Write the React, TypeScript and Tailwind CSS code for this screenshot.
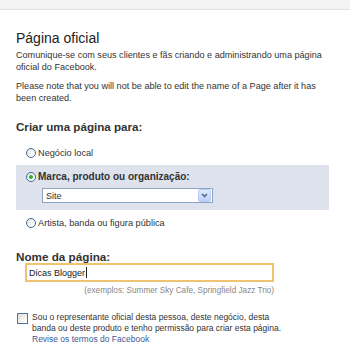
import * as React from "react";

function Radio({ checked = false }: { checked?: boolean }) {
  return (
    <span className="flex h-[10px] w-[10px] shrink-0 items-center justify-center rounded-full border border-[#3d6a9c] bg-[linear-gradient(135deg,#e2e2dc_0%,#ffffff_80%)]">
      {checked && <span className="h-[4px] w-[4px] rounded-full bg-[#2cb02c]" />}
    </span>
  );
}

function RadioRow({ label, checked, bold }: { label: string; checked?: boolean; bold?: boolean }) {
  return (
    <label className="flex h-[12px] items-center gap-[2px] pl-[10px]">
      <Radio checked={checked} />
      <span className={bold ? "text-[10px] font-bold leading-[12px] text-[#333]" : "text-[9.2px] leading-[12px]"}>
        {label}
      </span>
    </label>
  );
}

export default function App() {
  return (
    <div className="h-[350px] w-[350px] overflow-hidden bg-white font-['Liberation_Sans',Arial,sans-serif] text-[#333]">
      {/* Top strip */}
      <div className="h-[10px] border-b border-[#e2e2e2] bg-[#f3f3f3]" />

      <div className="pl-4 pr-5">
        <h1 className="mt-[20px] text-[14px] leading-4 text-[#222]">Página oficial</h1>
        <p className="mt-[3px] text-[9.1px] leading-[12px]">
          Comunique-se com seus clientes e fãs criando e administrando uma página oficial do Facebook.
        </p>
        <p className="mt-[7px] text-[9.1px] leading-[12px]">
          Please note that you will not be able to edit the name of a Page after it has been created.
        </p>

        <h2 className="mt-[16px] text-[11.6px] font-bold leading-[14px] text-[#333]">Criar uma página para:</h2>

        <div className="mt-[13px]">
          <RadioRow label="Negócio local" />
          <div className="mt-[6px] h-[45px] w-[313px] bg-[#dde2ec] pt-[6px]">
            <RadioRow label="Marca, produto ou organização:" checked bold />
            <div className="ml-[26px] mt-[5px] flex h-[15px] w-[171px] items-center justify-between border border-[#8aa5c2] bg-white pl-[3px] pr-[1px]">
              <span className="text-[9px] leading-[12px]">Site</span>
              <span className="flex h-[13px] w-[13px] items-center justify-center rounded-[2px] border border-[#b9cbf3] bg-[linear-gradient(to_bottom,#e1ebfd_0%,#bccff9_100%)]">
                <svg width="7" height="5" viewBox="0 0 7 5" fill="none">
                  <path d="M1 1 L3.5 3.5 L6 1" stroke="#4d6185" strokeWidth="1.5" />
                </svg>
              </span>
            </div>
          </div>
          <div className="mt-[7px]">
            <RadioRow label="Artista, banda ou figura pública" />
          </div>
        </div>

        <h3 className="mt-[21px] text-[11.7px] font-bold leading-[13px] text-[#333]">Nome da página:</h3>
        <div className="ml-[9px] w-[249px]">
          <div className="flex h-[19px] items-center border-2 border-[#eec372] bg-white pl-[2px]">
            <span className="text-[9px] leading-[12px] text-[#222]">Dicas Blogger</span>
            <span className="ml-px h-[11px] w-px bg-[#222]" />
          </div>
          <p className="mt-[4px] text-right text-[8.2px] leading-[10px] text-[#888]">
            (exemplos: Summer Sky Cafe, Springfield Jazz Trio)
          </p>
        </div>

        <div className="mt-[16px] flex items-start gap-[4px] pl-px">
          <span className="mt-px h-[11px] w-[11px] shrink-0 border border-[#4a75a6] bg-[linear-gradient(135deg,#dedcd4_0%,#ffffff_85%)]" />
          <p className="text-[8.5px] leading-[11px]">
            Sou o representante oficial desta pessoa, deste negócio, desta
            <br />
            banda ou deste produto e tenho permissão para criar esta página.
            <br />
            <a className="text-[#3b5998]">Revise os termos do Facebook</a>
          </p>
        </div>
      </div>
    </div>
  );
}
